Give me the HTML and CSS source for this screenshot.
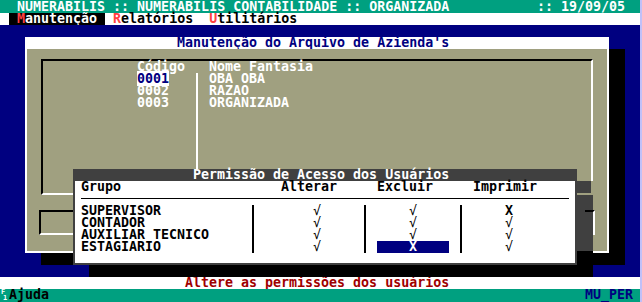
FILE: index.html
```html
<!DOCTYPE html>
<html lang="pt">
<head>
<meta charset="utf-8">
<title>NUMERABILIS</title>
<link rel="stylesheet" href="styles.css">
</head>
<body>
<div class="screen">
  <div class="titlebar">
    <span>NUMERABILIS :: NUMERABILIS CONTABILIDADE :: ORGANIZADA</span>
    <span>:: 19/09/05</span>
  </div>
  <div class="menubar">
    <span class="menu-item active"><span class="hot">M</span>anutenção</span>
    <span class="menu-item"><span class="hot">R</span>elatórios</span>
    <span class="menu-item"><span class="hot">U</span>tilitários</span>
  </div>
  <div class="desktop">
    <div class="window">
      <div class="win-title">Manutenção do Arquivo de Azienda's</div>
      <div class="win-body">
        <div class="list-frame">
          <div class="list-head"><span class="h-code">Código</span><span>Nome Fantasia</span></div>
          <div class="list-body">
            <div class="codes">
              <div><span class="sel">0001</span></div>
              <div>0002</div>
              <div>0003</div>
            </div>
            <div class="sep"></div>
            <div class="names">
              <div>OBA OBA</div>
              <div>RAZAO</div>
              <div>ORGANIZADA</div>
            </div>
          </div>
        </div>
        <div class="input-frame"></div>
      </div>
    </div>
    <div class="dialog">
      <div class="dlg-title">Permissão de Acesso dos Usuários</div>
      <div class="dlg-body">
        <div class="grid head">
          <span>Grupo</span><span></span>
          <span class="h-alt">Alterar</span><span></span>
          <span class="h-exc">Excluir</span><span></span>
          <span class="h-imp">Imprimir</span>
        </div>
        <div class="rule"></div>
        <div class="grid">
          <span>SUPERVISOR</span><span class="bar"></span>
          <span class="c-alt chk">√</span><span class="bar"></span>
          <span class="c-exc chk">√</span><span class="bar"></span>
          <span class="c-imp">X</span>
        </div>
        <div class="grid">
          <span>CONTADOR</span><span class="bar"></span>
          <span class="c-alt chk">√</span><span class="bar"></span>
          <span class="c-exc chk">√</span><span class="bar"></span>
          <span class="c-imp chk">√</span>
        </div>
        <div class="grid">
          <span>AUXILIAR TECNICO</span><span class="bar"></span>
          <span class="c-alt chk">√</span><span class="bar"></span>
          <span class="c-exc chk">√</span><span class="bar"></span>
          <span class="c-imp chk">√</span>
        </div>
        <div class="grid">
          <span>ESTAGIARIO</span><span class="bar"></span>
          <span class="c-alt chk">√</span><span class="bar"></span>
          <span class="c-cur"><span class="cursor">X</span></span><span class="bar"></span>
          <span class="c-imp chk">√</span>
        </div>
      </div>
    </div>
  </div>
  <div class="status">Altere as permissões dos usuários</div>
  <div class="helpbar">
    <span class="help"><span class="fkey"><span>F</span><span class="fnum">1</span></span>Ajuda</span>
    <span class="prog">MU_PER</span>
  </div>
</div>
</body>
</html>
```
FILE: styles.css
```css
html, body {
  margin: 0;
  padding: 0;
}
body {
  background: #c0c0f8;
  font-family: "DejaVu Sans Mono", "Liberation Mono", monospace;
  font-size: 13.3px;
  font-weight: bold;
  line-height: 12px;
}
.screen {
  width: 640px;
  height: 302px;
  display: flex;
  flex-direction: column;
  white-space: nowrap;
}
.titlebar {
  height: 13px;
  flex: none;
  box-sizing: border-box;
  padding: 1px 15px 0 17px;
  background: #00a080;
  color: #fff;
  display: flex;
  justify-content: space-between;
}
.menubar {
  height: 12px;
  flex: none;
  background: #fff;
  color: #000;
  display: flex;
  padding-left: 9px;
}
.menu-item {
  padding: 0 8px;
}
.menu-item.active {
  background: #000;
  color: #fff;
}
.hot {
  color: #ff4040;
}
.desktop {
  height: 252px;
  flex: none;
  position: relative;
  background: #000080;
  overflow: hidden;
}
.window {
  margin: 12px 0 0 25px;
  width: 584px;
  height: 216px;
  box-sizing: border-box;
  padding: 0 2px 2px;
  background: #fff;
  box-shadow: 16px 12px 0 #000;
  display: flex;
  flex-direction: column;
}
.win-title {
  height: 12px;
  padding-left: 150px;
  color: #000080;
}
.win-body {
  flex: 1;
  background: #a0a080;
  padding-top: 10px;
}
.list-frame {
  margin-left: 14px;
  width: 552px;
  height: 136px;
  box-sizing: border-box;
  border: 2px solid;
  border-color: #000 #fff #fff #000;
  padding-left: 94px;
  display: flex;
  flex-direction: column;
  color: #fff;
}
.list-head {
  height: 12px;
}
.h-code {
  display: inline-block;
  width: 72px;
}
.list-body {
  flex: 1;
  display: flex;
}
.codes {
  width: 56px;
}
.sel {
  background: #fff;
  color: #000080;
}
.sep {
  width: 2px;
  margin: 0 11px 0 3px;
  background: #fff;
}
.input-frame {
  margin: 15px 0 0 12px;
  width: 556px;
  height: 25px;
  box-sizing: border-box;
  border: 2px solid;
  border-color: #000 #fff #fff #000;
}
.dialog {
  position: absolute;
  left: 73px;
  top: 144px;
  width: 504px;
  height: 96px;
  box-sizing: border-box;
  padding: 0 2px 2px;
  background: #404040;
  box-shadow: 16px 12px 0 #000;
  display: flex;
  flex-direction: column;
}
.dialog::after {
  content: "";
  position: absolute;
  left: 504px;
  top: 12px;
  width: 16px;
  height: 70px;
  background:
    linear-gradient(#a0a080, #a0a080) 0 12px / 14px 2px no-repeat,
    linear-gradient(#a0a080, #a0a080) 14px 0 / 2px 14px no-repeat,
    linear-gradient(#000, #000) 8px 29px / 8px 2px no-repeat,
    #404040;
}
.dlg-title {
  height: 12px;
  flex: none;
  padding-left: 118px;
  color: #fff;
}
.dlg-body {
  flex: 1;
  background: #fff;
  color: #000;
  padding-left: 6px;
}
.grid {
  display: grid;
  grid-template-columns: 168px 8px 104px 8px 88px 8px 1fr;
  height: 12px;
}
.rule {
  margin: 5px 0 6px;
  width: 488px;
  height: 1px;
  background: #000;
}
.h-alt { padding-left: 24px; }
.h-exc { padding-left: 8px; }
.h-imp { padding-left: 8px; }
.bar {
  background: linear-gradient(#000, #000) center / 2px 100% no-repeat;
}
.c-alt { padding-left: 56px; }
.c-exc { padding-left: 40px; }
.c-imp { padding-left: 40px; }
.chk {
  font-weight: normal;
}
.c-cur {
  padding-left: 8px;
}
.cursor {
  display: inline-block;
  width: 72px;
  text-align: center;
  background: #000080;
  color: #fff;
}
.status {
  height: 12px;
  flex: none;
  background: #fff;
  color: #a00000;
  padding-left: 185px;
}
.helpbar {
  height: 13px;
  flex: none;
  box-sizing: border-box;
  background: #00a080;
  display: flex;
  justify-content: space-between;
  padding: 0 7px 0 1px;
}
.help {
  color: #000;
  display: flex;
}
.fkey {
  width: 8px;
  display: flex;
  flex-direction: column;
  font-size: 7px;
  line-height: 6px;
  color: #fff;
}
.fnum {
  padding-left: 2px;
}
.prog {
  color: #000080;
}
```
